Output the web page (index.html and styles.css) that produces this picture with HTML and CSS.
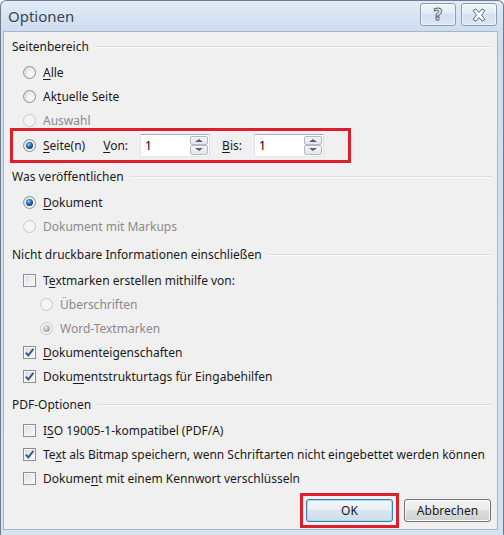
FILE: index.html
```html
<!DOCTYPE html>
<html lang="de">
<head>
<meta charset="utf-8">
<title>Optionen</title>
<link rel="stylesheet" href="styles.css">
</head>
<body>
<div class="window">
  <div class="titlebar">
    <span class="title">Optionen</span>
    <div class="capbtns">
      <div class="capbtn"><span class="qmark">?</span></div>
      <div class="capbtn">
        <svg width="16" height="14" viewBox="0 0 16 14"><path d="M2 2.5 L5 1 L8 4.5 L11 1 L14 2.5 L10.5 7 L14 11.5 L11 13 L8 9.5 L5 13 L2 11.5 L5.5 7 Z" fill="#fff" stroke="#5b6b80" stroke-width="1" stroke-linejoin="round"/></svg>
      </div>
    </div>
  </div>
  <div class="client">
    <div class="ghead first"><span>Seitenbereich</span><i class="rule"></i></div>
    <div class="row"><span class="radio"></span><span><u>A</u>lle</span></div>
    <div class="row"><span class="radio"></span><span>Ak<u>t</u>uelle Seite</span></div>
    <div class="row dis"><span class="radio"></span><span>Auswahl</span></div>
    <div class="row pages mark">
      <span class="radio on"></span><span class="lbl"><u>S</u>eite(n)</span>
      <span class="from"><u>V</u>on:</span>
      <div class="spin"><span class="val">1</span><span class="arrows"><span class="arrow"><i class="up"></i></span><span class="arrow"><i class="down"></i></span></span></div>
      <span class="to"><u>B</u>is:</span>
      <div class="spin"><span class="val">1</span><span class="arrows"><span class="arrow"><i class="up"></i></span><span class="arrow"><i class="down"></i></span></span></div>
    </div>

    <div class="ghead g2"><span>Was veröffentlichen</span><i class="rule"></i></div>
    <div class="row"><span class="radio on"></span><span><u>D</u>okument</span></div>
    <div class="row dis"><span class="radio"></span><span>Dokument mit Markups</span></div>

    <div class="ghead g3"><span>Nicht druckbare Informationen einschließen</span><i class="rule"></i></div>
    <div class="row"><span class="check"></span><span>T<u>e</u>xtmarken erstellen mithilfe von:</span></div>
    <div class="row sub dis"><span class="radio"></span><span>Überschriften</span></div>
    <div class="row sub dis"><span class="radio on"></span><span>Word-Textmarken</span></div>
    <div class="row"><span class="check on"><svg width="11" height="11" viewBox="0 0 11 11"><path d="M1.8 5.6 L4.3 8.4 L9.4 1.8" fill="none" stroke="#3f5a8f" stroke-width="2"/></svg></span><span><u>D</u>okumenteigenschaften</span></div>
    <div class="row"><span class="check on"><svg width="11" height="11" viewBox="0 0 11 11"><path d="M1.8 5.6 L4.3 8.4 L9.4 1.8" fill="none" stroke="#3f5a8f" stroke-width="2"/></svg></span><span>Doku<u>m</u>entstrukturtags für Eingabehilfen</span></div>

    <div class="ghead g3"><span>PDF-Optionen</span><i class="rule"></i></div>
    <div class="row"><span class="check"></span><span>I<u>S</u>O 19005-1-kompatibel (PDF/A)</span></div>
    <div class="row"><span class="check on"><svg width="11" height="11" viewBox="0 0 11 11"><path d="M1.8 5.6 L4.3 8.4 L9.4 1.8" fill="none" stroke="#3f5a8f" stroke-width="2"/></svg></span><span>Te<u>x</u>t als Bitmap speichern, wenn Schriftarten nicht eingebettet werden können</span></div>
    <div class="row"><span class="check"></span><span>Dokume<u>n</u>t mit einem Kennwort verschlüsseln</span></div>

    <div class="buttons">
      <div class="btn default mark">OK</div>
      <div class="btn">Abbrechen</div>
    </div>
  </div>
</div>
</body>
</html>
```

FILE: styles.css
```css
html, body {
  margin: 0;
  padding: 0;
}
body {
  width: 504px;
  height: 535px;
  overflow: hidden;
  font-family: "Noto Sans", "Open Sans", sans-serif;
  font-size: 12px;
  color: #1a1a1a;
}
.window {
  width: 504px;
  height: 535px;
  box-sizing: border-box;
  display: flex;
  flex-direction: column;
  background: linear-gradient(#dbe6f3, #cfdced 40px, #d6e2f0);
  border: 1px solid #6d7c8e;
  border-bottom: none;
  border-radius: 6px 6px 0 0;
}
.titlebar {
  height: 30px;
  display: flex;
  align-items: center;
  justify-content: space-between;
  padding-left: 7px;
  padding-right: 6px;
  background: linear-gradient(#e2ebf6, #cddcef);
  border-radius: 6px 6px 0 0;
}
.title {
  font-size: 15px;
  color: #3a4452;
}
.capbtns {
  display: flex;
  gap: 5px;
  align-self: flex-start;
  margin-top: 2px;
}
.capbtn {
  width: 34px;
  height: 21px;
  border: 1px solid #8b9bb0;
  border-radius: 3px;
  background: linear-gradient(rgba(255,255,255,0.55), rgba(255,255,255,0.15) 50%, rgba(200,215,235,0.3) 50%, rgba(255,255,255,0.25));
  box-shadow: inset 0 0 0 1px rgba(255,255,255,0.5);
  display: flex;
  align-items: center;
  justify-content: center;
}
.qmark {
  font-family: "DejaVu Sans", sans-serif;
  font-weight: bold;
  font-size: 16px;
  line-height: 16px;
  color: #fff;
  -webkit-text-stroke: 1px #5b6b80;
}
.client {
  flex: 1;
  margin: 0 5px 5px 2px;
  background: #f0f0f0;
  border: 1px solid #a9b5c3;
  display: flex;
  flex-direction: column;
  padding: 4px 6px 0 8px;
}
.ghead {
  height: 20px;
  display: flex;
  align-items: center;
  gap: 6px;
}
.g2 { margin-top: 9px; }
.g3 { margin-top: 6px; }
.rule {
  flex: 1;
  height: 0;
  border-top: 1px solid #d9dde2;
  border-bottom: 1px solid #fafafa;
  margin-top: 2px;
}
.row {
  height: 24px;
  display: flex;
  align-items: center;
  padding-left: 11px;
  gap: 7px;
}
.row.sub { padding-left: 28px; }
.row.dis { color: #8a8a8a; }
.ghead + .row { margin-top: 4px; }
.radio {
  width: 13px;
  height: 13px;
  box-sizing: border-box;
  border-radius: 50%;
  border: 1px solid #8c8f94;
  background: radial-gradient(circle at 65% 65%, #ffffff, #f0f0f0 40%, #cfd2d6 100%);
  display: inline-flex;
  align-items: center;
  justify-content: center;
  flex: none;
}
.radio.on::after {
  content: "";
  width: 7px;
  height: 7px;
  border-radius: 50%;
  background: radial-gradient(circle at 40% 35%, #8fd5fb 0, #2f7bbf 35%, #0d3f74 70%, #3f8fd0 100%);
}
.dis .radio {
  border-color: #c8c8c8;
  background: #f4f4f4;
}
.dis .radio.on::after {
  background: radial-gradient(circle at 40% 35%, #e8e8e8 0, #b0b0b0 55%, #9a9a9a 100%);
}
.check {
  width: 13px;
  height: 13px;
  box-sizing: border-box;
  border: 1px solid #8e8f8f;
  background: linear-gradient(135deg, #d9dcdf, #fbfbfb);
  box-shadow: inset 0 0 0 1px #f6f6f6;
  display: inline-flex;
  align-items: center;
  justify-content: center;
  flex: none;
}
.check svg { display: block; }
u { text-decoration: underline; text-underline-offset: 2px; }

.pages {
  margin-top: 1px;
  gap: 0;
  position: relative;
}
.pages .radio { margin-right: 7px; }
.pages .from { margin-left: 18px; margin-right: 12px; }
.pages .to { margin-left: 12px; margin-right: 12px; }
.mark::before {
  content: "";
  position: absolute;
  border: 3px solid #dc1f2c;
  pointer-events: none;
}
.pages::before {
  left: -2px;
  width: 335px;
  top: -5px;
  bottom: -6px;
}
.spin {
  width: 70px;
  height: 23px;
  box-sizing: border-box;
  border: 1px solid #abadb3;
  border-color: #abadb3 #dbdfe6 #e3e9ef #e2e3ea;
  background: #fff;
  display: flex;
}
.val {
  flex: 1;
  padding-left: 4px;
  line-height: 21px;
  color: #000;
}
.arrows {
  width: 19px;
  display: flex;
  flex-direction: column;
  padding: 1px 1px 1px 0;
  box-sizing: border-box;
}
.arrow {
  flex: 1;
  border: 1px solid #b4b9c2;
  border-radius: 2px;
  background: linear-gradient(#f4f4f4, #e4e6ea);
  display: flex;
  align-items: center;
  justify-content: center;
}
.up, .down {
  width: 0;
  height: 0;
  border-left: 4px solid transparent;
  border-right: 4px solid transparent;
}
.up { border-bottom: 3px solid #4d6185; }
.down { border-top: 3px solid #4d6185; }

.buttons {
  display: flex;
  justify-content: flex-end;
  gap: 11px;
  margin-top: 9px;
  padding-right: 0;
}
.btn {
  width: 87px;
  height: 23px;
  box-sizing: border-box;
  border: 1px solid #707070;
  border-radius: 3px;
  background: linear-gradient(#f2f2f2, #ebebeb 50%, #dddddd 50%, #cfcfcf);
  box-shadow: inset 0 0 0 1px #fbfbfb;
  display: flex;
  align-items: center;
  justify-content: center;
  color: #1a1a1a;
  position: relative;
}
.btn.default {
  border-color: #3c7fb1;
  background: linear-gradient(#f3f7fb, #e6eef6 50%, #d9e5f0 50%, #d0dde9);
  box-shadow: inset 0 0 0 1px #a8d8f4;
}
.btn.default::before {
  inset: -7px -7px -7px -7px;
}
```
